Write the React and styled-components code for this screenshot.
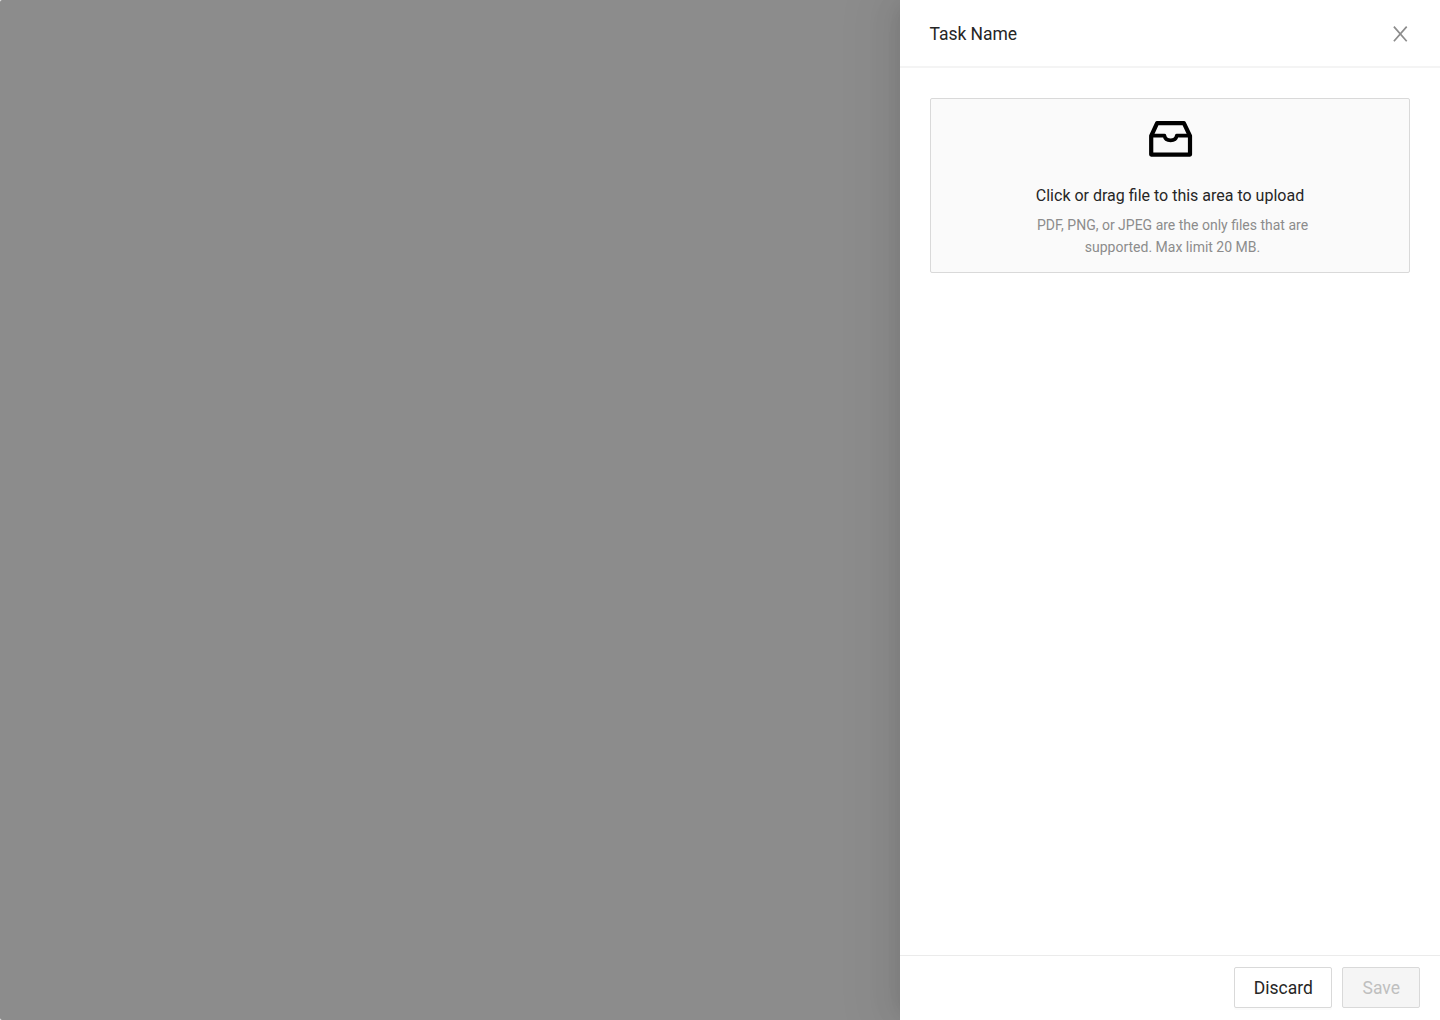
import React from "react";
import styled, { createGlobalStyle } from "styled-components";

const GlobalStyle = createGlobalStyle`
  * { box-sizing: border-box; }
  body { margin: 0; background: #fff; font-family: Roboto, "Liberation Sans", sans-serif; }
`;

const Screen = styled.div`
  display: flex;
  justify-content: flex-end;
  height: 1020px;
  background: #8c8c8c;
  border-radius: 2px 0 0 2px;
  overflow: hidden;
`;

const Drawer = styled.aside`
  display: flex;
  flex-direction: column;
  width: 540px;
  background: #fff;
  box-shadow: -6px 0 16px -8px rgba(0, 0, 0, 0.08),
    -9px 0 28px rgba(0, 0, 0, 0.05),
    -12px 0 48px 16px rgba(0, 0, 0, 0.03);
`;

const Header = styled.header`
  display: flex;
  align-items: center;
  justify-content: space-between;
  height: 68px;
  padding: 2px 30px 0 29.6px;
  border-bottom: 2px solid #f4f4f4;
`;

const Title = styled.h1`
  margin: 0;
  font-size: 17.5px;
  line-height: 28px;
  letter-spacing: -0.05px;
  font-weight: 400;
  color: #262626;
`;

const CloseButton = styled.button`
  display: flex;
  padding: 0;
  border: 0;
  background: none;
  color: #8c8c8c;
`;

const Body = styled.main`
  flex: 1;
  padding: 30px;
`;

const UploadArea = styled.section`
  display: flex;
  flex-direction: column;
  align-items: center;
  height: 175px;
  padding-top: 19px;
  border: 1px solid #d9d9d9;
  border-radius: 2px;
  background: #fafafa;
`;

const UploadText = styled.p`
  margin: 24px 0 0;
  font-size: 16px;
  line-height: 24px;
  color: #262626;
`;

const UploadHint = styled.p`
  width: 290px;
  margin: 6px 0 0 5px;
  font-size: 14px;
  line-height: 22px;
  text-align: center;
  color: #8c8c8c;
`;

const Footer = styled.footer`
  display: flex;
  justify-content: flex-end;
  gap: 10px;
  height: 65px;
  padding: 11px 20px 0;
  border-top: 1px solid #ebebeb;
`;

const Button = styled.button`
  width: ${(p) => p.$width}px;
  height: 41px;
  padding: 0;
  border: 1px solid #d9d9d9;
  border-radius: 2px;
  background: ${(p) => (p.disabled ? "#f5f5f5" : "#fff")};
  color: ${(p) => (p.disabled ? "#bfbfbf" : "#262626")};
  box-shadow: ${(p) => (p.disabled ? "none" : "0 2px 0 rgba(0, 0, 0, 0.016)")};
  font: 400 17.5px/28px Roboto, "Liberation Sans", sans-serif;
`;

function CloseIcon() {
  return (
    <svg width="20" height="20" viewBox="0 0 20 20" fill="none" stroke="currentColor" strokeWidth="1.7">
      <path d="M3.9 2.6 16.7 17.2M16.7 2.6 3.9 17.2" />
    </svg>
  );
}

function InboxIcon() {
  return (
    <svg width="46" height="42" viewBox="0 0 46 42" fill="none" stroke="#000" strokeWidth="4.2" strokeLinejoin="round">
      <path d="M10.1 5.2h26.8L43 18v18.6H4.2V18z" />
      <path d="M4.3 17.6H17.4c.6 2.9 3 4.7 6.2 4.7s5.6-1.8 6.2-4.7h13" strokeWidth="3.7" />
    </svg>
  );
}

export default function App() {
  return (
    <>
      <GlobalStyle />
      <Screen>
        <Drawer>
          <Header>
            <Title>Task Name</Title>
            <CloseButton aria-label="Close">
              <CloseIcon />
            </CloseButton>
          </Header>
          <Body>
            <UploadArea>
              <InboxIcon />
              <UploadText>Click or drag file to this area to upload</UploadText>
              <UploadHint>
                PDF, PNG, or JPEG are the only files that are
                <br />
                supported. Max limit 20 MB.
              </UploadHint>
            </UploadArea>
          </Body>
          <Footer>
            <Button $width={98.2}>Discard</Button>
            <Button $width={77.6} disabled>
              Save
            </Button>
          </Footer>
        </Drawer>
      </Screen>
    </>
  );
}
